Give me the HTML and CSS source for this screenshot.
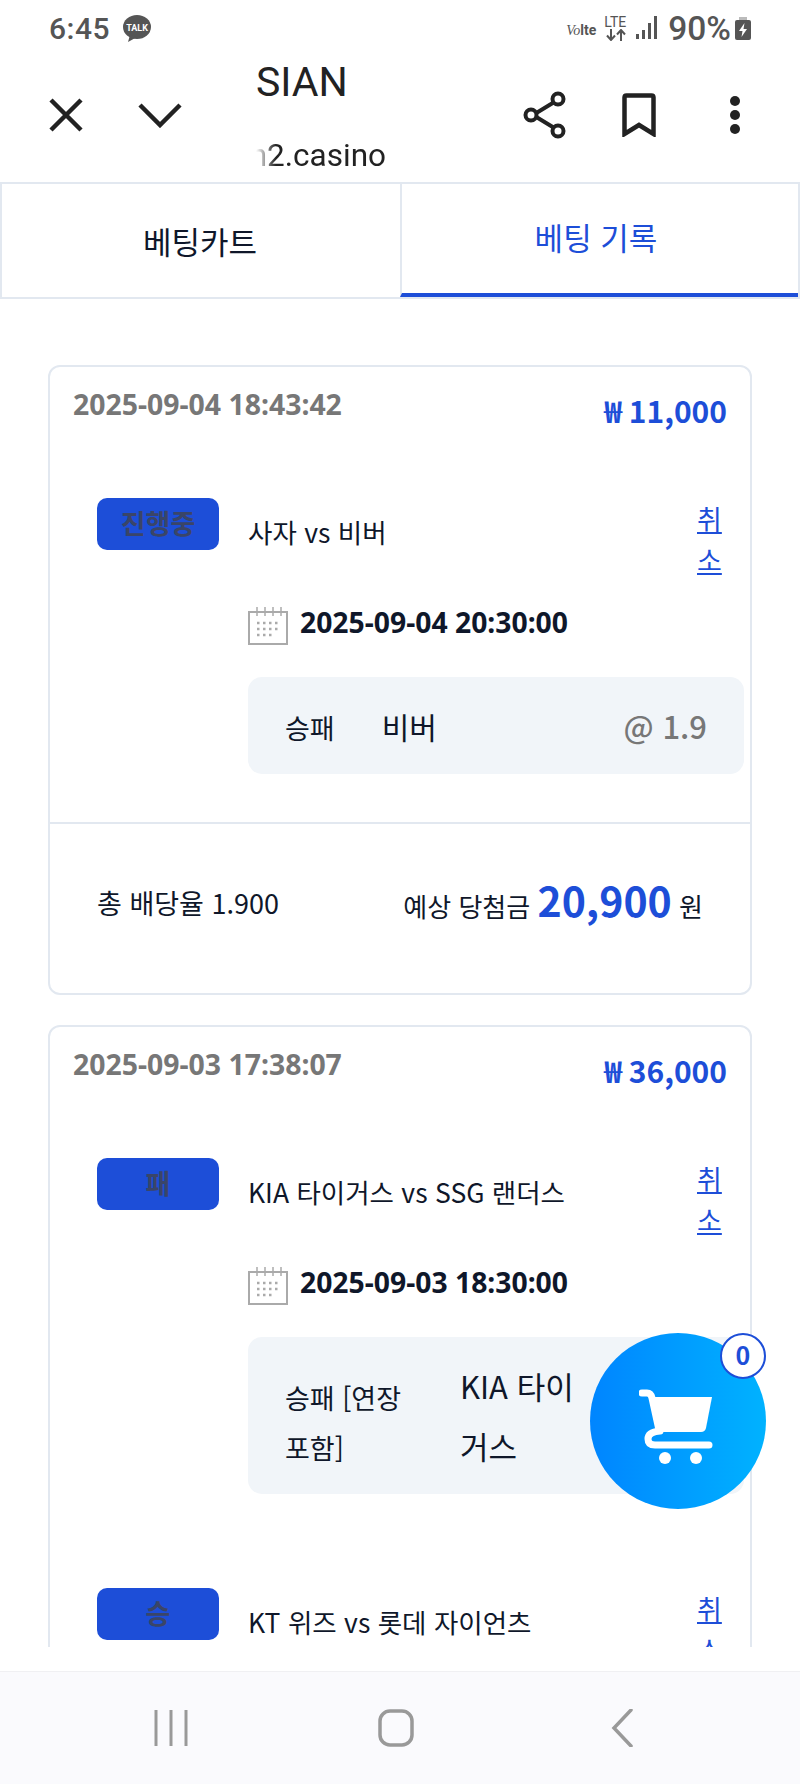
FILE: index.html
```html
<!DOCTYPE html>
<html lang="ko">
    <head>
        <meta charset="utf-8">
        <title>베팅 기록</title>
        <link rel="stylesheet" href="styles.css">
    </head>
    <body>
        <div class="statusbar">
            <div class="status-left">
                <span class="clock">6:45</span>
                <svg class="talk" width="30" height="28" viewBox="0 0 30 28">
                    <ellipse cx="15" cy="12" rx="14" ry="12" fill="#555"/>
                    <path d="M8 20 L6 27 L15 22 Z" fill="#555"/>
                    <text x="15" y="15.500" text-anchor="middle" class="talk-text">TALK</text>
                </svg>
            </div>
            <div class="status-right">
                <span class="volte"><i>Vo</i><b>lte</b></span>
                <span class="lte">LTE
                    <svg width="24" height="12" viewBox="0 0 24 12">
                        <path d="M7 0 V10 M3 6.500 L7 11 L11 6.500 M17 12 V2 M13 5.500 L17 1 L21 5.500" fill="none" stroke="#555" stroke-width="2"/>
                    </svg>
                </span>
                <svg class="signal" width="22" height="24" viewBox="0 0 22 24">
                    <rect x="0" y="18" width="3" height="5" fill="#555"/>
                    <rect x="6" y="14" width="3" height="9" fill="#555"/>
                    <rect x="12" y="7" width="3" height="16" fill="#555"/>
                    <rect x="18" y="0" width="3" height="23" fill="#555"/>
                </svg>
                <span class="percent">90%</span>
                <svg width="16" height="23" viewBox="0 0 16 23">
                    <rect x="4" y="0" width="8" height="4" fill="#bbb"/>
                    <rect x="0" y="3" width="16" height="20" rx="2" fill="#555"/>
                    <path d="M9.500 6 L4 14 H7.500 L6.500 20 L12 12 H8.500 Z" fill="#fff"/>
                </svg>
            </div>
        </div>

        <div class="toolbar">
            <svg class="icon-close" width="34" height="34" viewBox="0 0 34 34">
                <path d="M2 2 L32 32 M32 2 L2 32" stroke="#222" stroke-width="4.500" fill="none"/>
            </svg>
            <svg class="icon-chevron" width="44" height="26" viewBox="0 0 44 26">
                <path d="M2 3 L22 23 L42 3" stroke="#222" stroke-width="4.500" fill="none"/>
            </svg>
            <div class="title">
                <div class="title-name">SIAN</div>
                <div class="title-url"><span>sian2.casino</span></div>
            </div>
            <svg class="icon-share" width="44" height="48" viewBox="0 0 44 48">
                <path d="M33 10 L10 24 L33 38" stroke="#222" stroke-width="4" fill="none"/>
                <circle cx="35" cy="8" r="5.500" fill="#fff" stroke="#222" stroke-width="4"/>
                <circle cx="8" cy="24" r="5.500" fill="#fff" stroke="#222" stroke-width="4"/>
                <circle cx="35" cy="40" r="5.500" fill="#fff" stroke="#222" stroke-width="4"/>
            </svg>
            <svg class="icon-mark" width="34" height="44" viewBox="0 0 34 44">
                <path d="M2.500 4.500 Q2.500 2.500 4.500 2.500 H29.500 Q31.500 2.500 31.500 4.500 V41 L17 32 L2.500 41 Z" stroke="#222" stroke-width="4.500" fill="none"/>
            </svg>
            <svg class="icon-more" width="12" height="40" viewBox="0 0 12 40">
                <circle cx="6" cy="6" r="5" fill="#222"/>
                <circle cx="6" cy="20" r="5" fill="#222"/>
                <circle cx="6" cy="34" r="5" fill="#222"/>
            </svg>
        </div>

        <div class="tabs">
            <div class="tab">베팅카트</div>
            <div class="tab tab-active">베팅 기록</div>
        </div>

        <div class="content">
            <div class="card">
                <div class="card-head">
                    <span class="card-date">2025-09-04 18:43:42</span>
                    <span class="card-amount">₩ 11,000</span>
                </div>
                <div class="item">
                    <div class="badge">진행중</div>
                    <div class="item-body">
                        <div class="item-top">
                            <span class="match">사자 vs 비버</span>
                            <a class="cancel" href="#">취소</a>
                        </div>
                        <div class="when">
                            <svg class="cal" width="40" height="38" viewBox="0 0 40 38">
                                <rect x="1" y="5" width="38" height="32" fill="none" stroke="#aaa" stroke-width="2"/>
                                <path d="M9 0 V9 M17 0 V9 M25 0 V9 M33 0 V9" stroke="#aaa" stroke-width="1.500"/>
                                <path d="M9 16 H32 M9 22 H32 M9 28 H26" stroke="#aaa" stroke-width="2.500" stroke-dasharray="2.500 3.500"/>
                            </svg>
                            <span>2025-09-04 20:30:00</span>
                        </div>
                        <div class="bet">
                            <span class="bet-label">승패</span>
                            <span class="bet-pick">비버</span>
                            <span class="bet-odds">@ 1.9</span>
                        </div>
                    </div>
                </div>
                <div class="card-foot">
                    <span class="total-rate">총 배당율 1.900</span>
                    <span class="payout">예상 당첨금 <b>20,900</b> 원</span>
                </div>
            </div>

            <div class="card">
                <div class="card-head">
                    <span class="card-date">2025-09-03 17:38:07</span>
                    <span class="card-amount">₩ 36,000</span>
                </div>
                <div class="item">
                    <div class="badge">패</div>
                    <div class="item-body">
                        <div class="item-top">
                            <span class="match">KIA 타이거스 vs SSG 랜더스</span>
                            <a class="cancel" href="#">취소</a>
                        </div>
                        <div class="when">
                            <svg class="cal" width="40" height="38" viewBox="0 0 40 38">
                                <rect x="1" y="5" width="38" height="32" fill="none" stroke="#aaa" stroke-width="2"/>
                                <path d="M9 0 V9 M17 0 V9 M25 0 V9 M33 0 V9" stroke="#aaa" stroke-width="1.500"/>
                                <path d="M9 16 H32 M9 22 H32 M9 28 H26" stroke="#aaa" stroke-width="2.500" stroke-dasharray="2.500 3.500"/>
                            </svg>
                            <span>2025-09-03 18:30:00</span>
                        </div>
                        <div class="bet bet-tall">
                            <span class="bet-label bet-label-wide">승패 [연장 포함]</span>
                            <span class="bet-pick bet-pick-wide">KIA 타이거스</span>
                        </div>
                    </div>
                </div>
                <div class="item item-next">
                    <div class="badge">승</div>
                    <div class="item-body">
                        <div class="item-top">
                            <span class="match">KT 위즈 vs 롯데 자이언츠</span>
                            <a class="cancel" href="#">취소</a>
                        </div>
                    </div>
                </div>
            </div>
        </div>

        <div class="cart">
            <svg width="74" height="76" viewBox="0 0 74 76">
                <path d="M3 4 H8 Q12 4 13 9 L20 41" stroke="#fff" stroke-width="7" stroke-linecap="round" fill="none"/>
                <path d="M14 8 H73 L67 39 Q66 43 62 43 H21 Z" fill="#fff"/>
                <path d="M21 42 Q9 43 9 50 Q9 56 16 56 H70" stroke="#fff" stroke-width="7" stroke-linecap="round" fill="none"/>
                <circle cx="26" cy="69" r="6" fill="#fff"/>
                <circle cx="57" cy="69" r="6" fill="#fff"/>
            </svg>
            <span class="cart-count">0</span>
        </div>

        <div class="navbar">
            <svg width="34" height="36" viewBox="0 0 34 36">
                <path d="M2 0 V36 M17 0 V36 M32 0 V36" stroke="#999" stroke-width="3"/>
            </svg>
            <svg width="36" height="38" viewBox="0 0 36 38">
                <rect x="2" y="2" width="32" height="34" rx="10" fill="none" stroke="#999" stroke-width="3.500"/>
            </svg>
            <svg class="nav-back" width="22" height="38" viewBox="0 0 22 38">
                <path d="M20 1 L3 19 L20 37" fill="none" stroke="#999" stroke-width="3.500" stroke-linecap="round"/>
            </svg>
        </div>
    </body>
</html>
```

FILE: styles.css
```css
*{
    box-sizing: border-box;
}
body{
    margin: 0;
    height: 1784px;
    display: flex;
    flex-direction: column;
    position: relative;
    overflow: hidden;
    background-color: white;
    color: #0f172a;
    font-family: "Noto Sans CJK KR", "Noto Sans", sans-serif;
}

/* status bar */
.statusbar{
    height: 54px;
    flex: none;
    display: flex;
    justify-content: space-between;
    align-items: center;
    padding: 2px 49px 0;
    color: #555;
    font-family: Roboto, sans-serif;
}
.status-left{
    display: flex;
    align-items: center;
    gap: 12px;
}
.clock{
    font-size: 30px;
    font-weight: 500;
    letter-spacing: 0.5px;
}
.talk{
    margin-top: 2px;
}
.talk-text{
    fill: white;
    font-family: Roboto, sans-serif;
    font-size: 9px;
    font-weight: 700;
}
.status-right{
    display: flex;
    align-items: center;
}
.volte{
    width: 38px;
    font-size: 14px;
    margin-top: 4px;
}
.volte i{
    font-family: "Liberation Serif", serif;
}
.lte{
    width: 32px;
    display: flex;
    flex-direction: column;
    align-items: flex-start;
    font-size: 14px;
    line-height: 13px;
}
.signal{
    margin-right: 10px;
}
.percent{
    font-size: 33.500px;
    font-weight: 500;
    margin-right: 4px;
}

/* browser toolbar */
.toolbar{
    height: 128px;
    flex: none;
    display: flex;
    align-items: center;
    padding: 0 0 6px 49px;
    position: relative;
}
.icon-chevron{
    margin-left: 55px;
}
.title{
    width: 268px;
    margin-left: 74px;
    margin-right: -1px;
    margin-top: 4px;
    color: #222;
    font-family: Roboto, sans-serif;
}
.title-name{
    font-size: 41px;
    line-height: 48px;
}
.title-url{
    width: 130px;
    margin-top: 30px;
    font-size: 31.500px;
    line-height: 40px;
    display: flex;
    justify-content: flex-end;
    overflow: hidden;
    white-space: nowrap;
    -webkit-mask-image: linear-gradient(to right, transparent, black 20px);
    mask-image: linear-gradient(to right, transparent, black 20px);
}
.icon-mark{
    margin-left: 55px;
}
.icon-more{
    margin-left: 73px;
}

/* tabs */
.tabs{
    height: 117px;
    flex: none;
    display: flex;
    border: solid #e2e8f0;
    border-width: 2px;
}
.tab{
    flex: 0 0 50%;
    display: flex;
    justify-content: center;
    align-items: center;
    font-size: 31px;
    padding-right: 2px;
}
.tab-active{
    color: #1d4ed8;
    border-left: 2px solid #e2e8f0;
    border-bottom: 4px solid #1d4ed8;
    padding: 0 8px 4px 0;
}

/* history list */
.content{
    height: 1348px;
    flex: none;
    padding: 66px 48px 0;
    overflow: hidden;
}
.card{
    border: 2px solid #e2e8f0;
    border-radius: 12px;
    margin-bottom: 30px;
}
.card-head{
    height: 131px;
    display: flex;
    justify-content: space-between;
    align-items: flex-start;
    padding: 17px 23px 0;
}
.card-date{
    color: #777;
    font-family: "Noto Sans", sans-serif;
    font-size: 28.400px;
    font-weight: 700;
    line-height: 40px;
}
.card-amount{
    color: #1d4ed8;
    font-size: 30px;
    font-weight: 700;
    line-height: 44px;
    margin-top: 4px;
}
.item{
    display: flex;
    padding-left: 47px;
    padding-right: 6px;
}
.item-next{
    margin-top: 94px;
    padding-bottom: 120px;
}
.badge{
    width: 122px;
    height: 52px;
    flex: none;
    margin-right: 29px;
    background-color: #1d4ed8;
    border-radius: 10px;
    color: #3a4568;
    font-size: 27px;
    font-weight: 700;
    line-height: 50px;
    text-align: center;
}
.item-body{
    flex: 1;
}
.item-top{
    display: flex;
    justify-content: space-between;
    align-items: flex-start;
    padding-right: 20px;
}
.match{
    font-size: 26.500px;
    line-height: 40px;
    margin-top: 14px;
}
.cancel{
    width: 27px;
    color: #1d4ed8;
    font-size: 27px;
    line-height: 41px;
}
.when{
    display: flex;
    align-items: flex-start;
    gap: 12px;
    margin-top: 24px;
    font-family: "Noto Sans", sans-serif;
    font-size: 28.300px;
    font-weight: 700;
    line-height: 36px;
}
.cal{
    margin-top: 3px;
}
.bet{
    display: flex;
    align-items: center;
    height: 97px;
    margin-top: 32px;
    padding: 0 37px;
    background-color: #f1f5f9;
    border-radius: 14px;
}
.bet-tall{
    height: 157px;
}
.bet-label{
    flex: none;
    font-size: 27px;
    line-height: 50px;
    margin-top: 4px;
    margin-right: 47px;
}
.bet-label-wide{
    width: 128px;
    margin-top: 14px;
}
.bet-pick{
    flex: 1;
    font-size: 30px;
    line-height: 60px;
}
.bet-pick-wide{
    flex: none;
    width: 125px;
    font-size: 31px;
}
.bet-odds{
    color: #777;
    font-size: 31px;
    font-weight: 500;
}
.card-foot{
    height: 171px;
    margin-top: 48px;
    display: flex;
    justify-content: space-between;
    align-items: center;
    padding: 0 47px;
    border-top: 2px solid #e2e8f0;
    font-size: 26px;
}
.total-rate{
    margin-top: -12px;
    font-size: 27px;
}
.payout{
    margin-top: -20px;
}
.payout b{
    color: #1d4ed8;
    font-size: 41px;
}

/* floating cart */
.cart{
    position: absolute;
    left: 590px;
    top: 1333px;
    width: 176px;
    height: 176px;
    border-radius: 50%;
    background-image: linear-gradient(to right, #0085ff, #00b2ff);
    display: flex;
    justify-content: center;
    align-items: center;
    padding: 12px 5px 0 0;
}
.cart-count{
    position: absolute;
    right: 0;
    top: 0;
    width: 46px;
    height: 46px;
    border-radius: 50%;
    border: 2px solid #1d4ed8;
    background-color: white;
    color: #1d4ed8;
    font-size: 25px;
    font-weight: 700;
    line-height: 38px;
    text-align: center;
}

/* android nav */
.navbar{
    position: absolute;
    left: 0;
    right: 0;
    top: 1671px;
    height: 113px;
    display: flex;
    align-items: center;
    padding-left: 154px;
    gap: 190px;
    background-color: #fafafd;
    border-top: 1px solid #f0f0f3;
}
.nav-back{
    margin-left: 7px;
}
```
